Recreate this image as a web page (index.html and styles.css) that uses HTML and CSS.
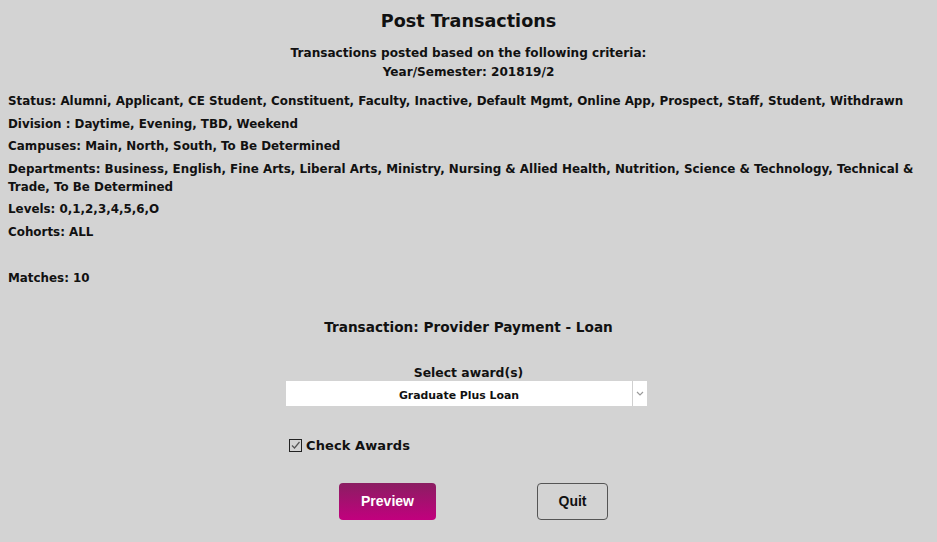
FILE: index.html
```html
<!DOCTYPE html>
<html>
<head>
<meta charset="utf-8">
<link rel="stylesheet" href="styles.css">
</head>
<body>
<div class="page">
  <h1 class="title">Post Transactions</h1>
  <div class="criteria">
    <div>Transactions posted based on the following criteria:</div>
    <div>Year/Semester: 201819/2</div>
  </div>
  <div class="list">
    <div class="row">Status: Alumni, Applicant, CE Student, Constituent, Faculty, Inactive, Default Mgmt, Online App, Prospect, Staff, Student, Withdrawn</div>
    <div class="row">Division : Daytime, Evening, TBD, Weekend</div>
    <div class="row">Campuses: Main, North, South, To Be Determined</div>
    <div class="row">Departments: Business, English, Fine Arts, Liberal Arts, Ministry, Nursing &amp; Allied Health, Nutrition, Science &amp; Technology, Technical &amp; Trade, To Be Determined</div>
    <div class="row">Levels: 0,1,2,3,4,5,6,O</div>
    <div class="row">Cohorts: ALL</div>
    <div class="row matches">Matches: 10</div>
  </div>
  <div class="txn">Transaction: Provider Payment - Loan</div>
  <div class="award">
    <div class="award-label">Select award(s)</div>
    <div class="select">
      <div class="select-text">Graduate Plus Loan</div>
      <div class="select-arrow"><svg width="8" height="5" viewBox="0 0 8 5"><path d="M1 1 L4 4 L7 1" fill="none" stroke="#9a9a9a" stroke-width="1.2"/></svg></div>
    </div>
  </div>
  <div class="check">
    <span class="box"><svg width="11" height="11" viewBox="0 0 11 11"><path d="M2 5.5 L4.5 8 L9.5 2" fill="none" stroke="#555" stroke-width="1.2"/></svg></span>
    <span>Check Awards</span>
  </div>
  <div class="buttons">
    <button class="btn primary">Preview</button>
    <button class="btn secondary">Quit</button>
  </div>
</div>
</body>
</html>
```
FILE: styles.css
```css
html, body {
  margin: 0;
  padding: 0;
  background: #d3d3d3;
}
body {
  font-family: "DejaVu Sans", sans-serif;
  font-weight: 700;
  color: #111;
  width: 937px;
  height: 542px;
  overflow: hidden;
}
.page {
  padding: 0 8px;
}
.title {
  margin: 0;
  padding-top: 8px;
  text-align: center;
  font-size: 17.6px;
  line-height: 26px;
}
.criteria {
  margin-top: 10px;
  text-align: center;
  font-size: 12.1px;
  line-height: 19px;
}
.list {
  margin-top: 10px;
  font-size: 11.9px;
}
.row {
  line-height: 18px;
  margin-bottom: 4.5px;
}
.matches {
  margin-top: 28px;
}
.txn {
  margin-top: 30px;
  text-align: center;
  font-size: 13.65px;
  line-height: 20px;
}
.award {
  margin-top: 27px;
  display: flex;
  flex-direction: column;
  align-items: center;
  font-size: 12.4px;
}
.award-label {
  line-height: 17px;
}
.select {
  width: 361px;
  height: 25px;
  background: #fff;
  display: flex;
  margin-left: -4px;
}
.select-text {
  flex: 1;
  text-align: center;
  line-height: 25px;
  padding-top: 2px;
  font-size: 10.9px;
}
.select-arrow {
  width: 14px;
  border-left: 1px solid #d0d0d0;
  display: flex;
  align-items: center;
  justify-content: center;
}
.check {
  margin-top: 32px;
  margin-left: 281px;
  display: flex;
  align-items: center;
  gap: 4px;
  font-size: 13px;
  letter-spacing: 0.1px;
}
.box {
  width: 11px;
  height: 11px;
  border: 1px solid #222;
  background: transparent;
  display: flex;
}
.buttons {
  margin-top: 30px;
  display: flex;
  margin-left: 331px;
  gap: 101px;
}
.btn {
  font-family: "Liberation Sans", Arial, sans-serif;
  font-weight: 700;
  font-size: 14px;
  height: 37px;
  border-radius: 4px;
  padding: 0;
}
.primary {
  width: 97px;
  color: #fff;
  border: none;
  background: linear-gradient(#8a1e62, #c2007e);
}
.secondary {
  width: 71px;
  color: #111;
  background: transparent;
  border: 1px solid #555;
}
```
